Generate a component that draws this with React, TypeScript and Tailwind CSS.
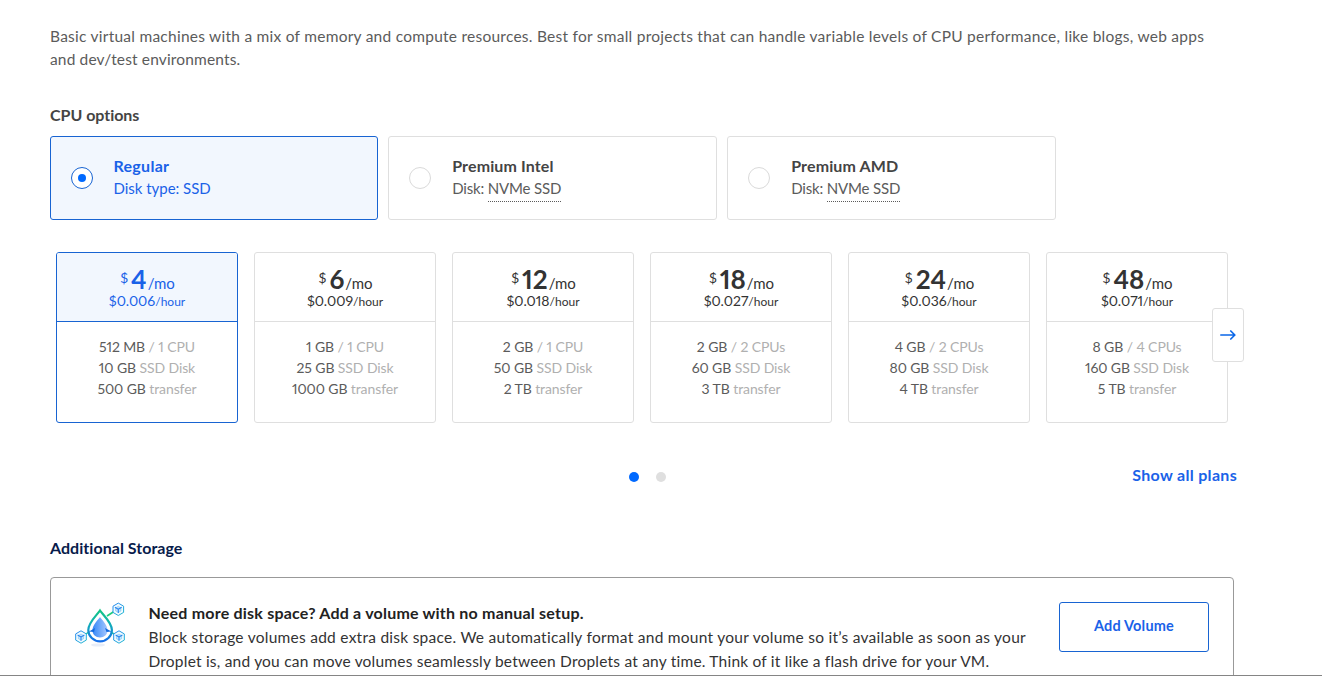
import React from "react";

type Plan = {
  price: string;
  hourly: string;
  memory: string;
  cpu: string;
  disk: string;
  transfer: string;
};

const plans: Plan[] = [
  { price: "4", hourly: "$0.006", memory: "512 MB", cpu: "1 CPU", disk: "10 GB", transfer: "500 GB" },
  { price: "6", hourly: "$0.009", memory: "1 GB", cpu: "1 CPU", disk: "25 GB", transfer: "1000 GB" },
  { price: "12", hourly: "$0.018", memory: "2 GB", cpu: "1 CPU", disk: "50 GB", transfer: "2 TB" },
  { price: "18", hourly: "$0.027", memory: "2 GB", cpu: "2 CPUs", disk: "60 GB", transfer: "3 TB" },
  { price: "24", hourly: "$0.036", memory: "4 GB", cpu: "2 CPUs", disk: "80 GB", transfer: "4 TB" },
  { price: "48", hourly: "$0.071", memory: "8 GB", cpu: "4 CPUs", disk: "160 GB", transfer: "5 TB" },
];

function CpuOption({ title, disk, selected }: { title: string; disk?: string; selected?: boolean }) {
  return (
    <div
      className={
        selected
          ? "flex h-[84px] items-center rounded-[3px] border border-[#1864d2] bg-[#f2f7fe] pl-5 text-[#1a62e8]"
          : "flex h-[84px] items-center rounded-[3px] border border-[#dfdfdf] pl-5 text-[#5b5b5b]"
      }
    >
      <span
        className={
          selected
            ? "mr-[20.5px] flex size-[22px] items-center justify-center rounded-full border border-[#1864d2] bg-white"
            : "mr-[21.2px] size-[22px] rounded-full border border-[#dadada] bg-white"
        }
      >
        {selected && <span className="size-2 rounded-full bg-[#0069ff]" />}
      </span>
      <div className="whitespace-nowrap text-[15px] leading-[23px]">
        <div
          className={
            selected
              ? "text-[16px] font-bold tracking-[0.28px]"
              : "text-[16px] font-bold tracking-[0.13px] text-[#444444]"
          }
        >
          {title}
        </div>
        {disk ? (
          <div className="h-[25px] tracking-[-0.17px]">
            Disk: <span className="inline-block h-[25px] border-b border-dotted border-[#5b5b5b]">{disk}</span>
          </div>
        ) : (
          <div className="h-[25px] tracking-[-0.02px]">Disk type: SSD</div>
        )}
      </div>
    </div>
  );
}

function PlanCard({ plan, selected }: { plan: Plan; selected?: boolean }) {
  return (
    <div
      className={
        selected
          ? "h-[171px] w-[182px] overflow-hidden rounded-[3px] border border-[#1864d2] text-center proportional-nums"
          : "h-[171px] w-[182px] overflow-hidden rounded-[3px] border border-[#dfdfdf] text-center proportional-nums"
      }
    >
      <div
        className={
          selected
            ? "h-[69px] border-b border-[#1864d2] bg-[#f2f7fe] pt-[13px] text-[#1a62e8]"
            : "h-[69px] border-b border-[#dfdfdf] pt-[13px] text-[#333333]"
        }
      >
        <div className="flex h-[27px] items-baseline justify-center pl-px leading-[27px]">
          <span className="relative -top-1.5 mr-[3px] text-[14px]">$</span>
          <span className="text-[26px] font-bold">{plan.price}</span>
          <span className="ml-px text-[15px]">/mo</span>
        </div>
        <div className="text-[14px] leading-4">
          {plan.hourly}
          <span className="text-[12px]">/hour</span>
        </div>
      </div>
      <div className="pt-3.5 text-[14px] leading-[21px] tracking-[-0.1px] text-[#b0b0b0]">
        <div>
          <span className="text-[#5b5b5b]">{plan.memory}</span> / {plan.cpu}
        </div>
        <div>
          <span className="text-[#5b5b5b]">{plan.disk}</span> SSD Disk
        </div>
        <div>
          <span className="text-[#5b5b5b]">{plan.transfer}</span> transfer
        </div>
      </div>
    </div>
  );
}

function Cube({ x, y }: { x: number; y: number }) {
  return (
    <g transform={`translate(${x} ${y})`} stroke="url(#cube)" strokeLinejoin="round">
      <path d="M0-6.2 5.3-3.1V3.1L0 6.2-5.3 3.1V-3.1Z" fill="#f3fbff" strokeWidth="1" />
      <path d="M0-3 2.7-1.5V1.7L0 3.2-2.7 1.7V-1.5Z" fill="#c3e2fc" strokeWidth=".3" />
      <path d="M-3.4-2 0 0 3.4-2M0 0v3.8" fill="none" stroke="#2a86ee" strokeWidth="1.1" />
    </g>
  );
}

function VolumeIcon() {
  return (
    <svg width="52" height="50" viewBox="74 600 52 50" fill="none" aria-hidden="true">
      <defs>
        <linearGradient id="drop" x1="0" y1="0" x2="0" y2="1">
          <stop offset="0" stopColor="#12c586" />
          <stop offset=".5" stopColor="#12aabd" />
          <stop offset="1" stopColor="#146de9" />
        </linearGradient>
        <linearGradient id="inner" x1="0" y1="0" x2="1" y2="0">
          <stop offset="0" stopColor="#3788f6" />
          <stop offset="1" stopColor="#a6c8ff" />
        </linearGradient>
        <linearGradient id="cube" gradientUnits="userSpaceOnUse" x1="-5" y1="-5" x2="5" y2="5">
          <stop offset="0" stopColor="#2589ee" />
          <stop offset="1" stopColor="#22b7d2" />
        </linearGradient>
      </defs>
      <ellipse cx="98" cy="645" rx="7" ry="1.6" fill="#e8edf8" />
      <path d="M107 616 114 611.5" stroke="#20cc7e" strokeWidth="1.7" />
      <path d="M86 634 90 631M109 631 114 634" stroke="#20c9a0" strokeWidth="1.5" />
      <path
        d="M100 610.5C97 615 88.3 622.5 88.3 630a11.8 11.3 0 0 0 23.6 0C111.9 622.5 103 615 100 610.5Z"
        fill="#fff"
        stroke="url(#drop)"
        strokeWidth="2.2"
      />
      <path
        d="M100 617C98 620 92.5 624.5 92.5 630.5c0 4 3.2 7 7.5 7s7.5-3 7.5-7C107.5 624.5 102 620 100 617Z"
        fill="url(#inner)"
      />
      <path d="M89 631.5 95 628 94 632ZM111.5 631.5 105 628 106.5 632Z" fill="#126ae0" />
      <Cube x={118.3} y={609.3} />
      <Cube x={81} y={637} />
      <Cube x={119} y={637} />
    </svg>
  );
}

export default function App() {
  return (
    <div className="flex h-[678px] w-[1322px] flex-col overflow-hidden bg-white font-['Lato',sans-serif]">
      <main className="h-[675px] shrink-0 overflow-hidden pl-[50px] pt-[25px]">
        <p className="h-[46px] whitespace-nowrap text-[15.5px] leading-[23px] tracking-[0.25px] text-[#5b5b5b]">
          Basic virtual machines with a mix of memory and compute resources. Best for small projects that can handle
          variable levels of CPU performance, like blogs, web apps
          <br />
          <span className="tracking-[0.15px]">and dev/test environments.</span>
        </p>

        <h2 className="mt-8 h-6 text-[16px] font-bold leading-6 tracking-[-0.03px] text-[#444444]">CPU options</h2>
        <div className="mt-[9px] grid grid-cols-[328px_329px_329px] gap-2.5">
          <CpuOption title="Regular" selected />
          <CpuOption title="Premium Intel" disk="NVMe SSD" />
          <CpuOption title="Premium AMD" disk="NVMe SSD" />
        </div>

        <div className="relative ml-1.5 mt-8 flex w-[1172px] gap-4">
          {plans.map((plan, i) => (
            <PlanCard key={plan.price} plan={plan} selected={i === 0} />
          ))}
          <button
            aria-label="Next plans"
            className="absolute -right-4 top-14 flex h-[54px] w-8 items-center justify-center rounded-[3px] border border-[#dfdfdf] bg-white"
          >
            <svg width="16" height="12" viewBox="0 0 16 12" fill="none" stroke="#0b67e8" strokeWidth="1.7" strokeLinecap="round" strokeLinejoin="round">
              <path d="M.8 6h14M10.8 2 14.8 6l-4 4" />
            </svg>
          </button>
        </div>

        <div className="mt-[41px] grid h-6 w-[1187px] grid-cols-[579px_37px_1fr] items-center">
          <span />
          <div className="flex gap-[17px] pt-px">
            <span className="size-2.5 shrink-0 rounded-full bg-[#0069ff]" />
            <span className="size-2.5 shrink-0 rounded-full bg-[#dfdfdf]" />
          </div>
          <a className="-mt-0.5 justify-self-end text-[16px] font-bold leading-6 tracking-[0.31px] text-[#1a62e8]">
            Show all plans
          </a>
        </div>

        <h2 className="mt-12 h-6 text-[16px] font-bold leading-6 tracking-[0.04px] text-[#081b4b]">
          Additional Storage
        </h2>
        <section className="mt-[17px] flex h-[120px] w-[1184px] items-start rounded-[4px] border border-[#999999] pl-[23px] pt-[22px]">
          <VolumeIcon />
          <div className="ml-[22.5px] mt-px w-[910.5px] whitespace-nowrap text-[15.5px] leading-6 text-[#333333]">
            <div className="text-[16px] font-bold tracking-[0.21px] text-[#222222]">
              Need more disk space? Add a volume with no manual setup.
            </div>
            <div className="tracking-[0.26px]">
              Block storage volumes add extra disk space. We automatically format and mount your volume so it’s available as soon as your
            </div>
            <div className="tracking-[0.21px]">
              Droplet is, and you can move volumes seamlessly between Droplets at any time. Think of it like a flash drive for your VM.
            </div>
          </div>
          <button className="mt-0.5 h-[50px] w-[150px] rounded-[3px] border border-[#1864d2] pb-[3px] text-[14.5px] font-bold tracking-[0.17px] text-[#1a62e8]">
            Add Volume
          </button>
        </section>
      </main>
      <div className="h-px shrink-0 bg-[#858585]" />
    </div>
  );
}
